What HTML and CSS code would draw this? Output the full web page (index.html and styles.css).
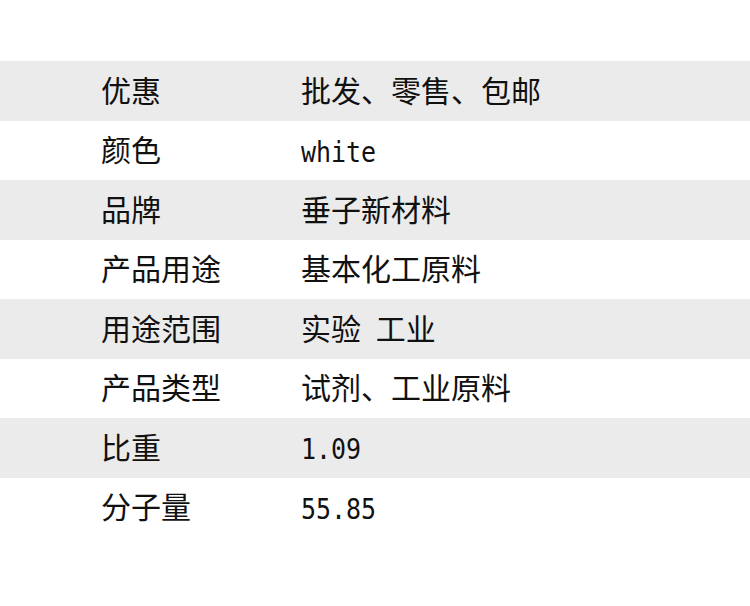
FILE: index.html
```html
<!DOCTYPE html>
<html lang="zh-CN">
<head>
<meta charset="utf-8">
<title>参数</title>
<link rel="stylesheet" href="styles.css">
</head>
<body>
<div class="table">
  <div class="row alt"><div class="k">优惠</div><div class="v">批发、零售、包邮</div></div>
  <div class="row"><div class="k">颜色</div><div class="v"><span class="lat">white</span></div></div>
  <div class="row alt"><div class="k">品牌</div><div class="v">垂子新材料</div></div>
  <div class="row"><div class="k">产品用途</div><div class="v">基本化工原料</div></div>
  <div class="row alt"><div class="k">用途范围</div><div class="v">实验 工业</div></div>
  <div class="row"><div class="k">产品类型</div><div class="v">试剂、工业原料</div></div>
  <div class="row alt"><div class="k">比重</div><div class="v"><span class="lat">1.09</span></div></div>
  <div class="row"><div class="k">分子量</div><div class="v"><span class="lat">55.85</span></div></div>
</div>
</body>
</html>
```
FILE: styles.css
```css
html, body {
  margin: 0;
  padding: 0;
  background: #ffffff;
}
body {
  width: 750px;
  height: 606px;
  overflow: hidden;
  font-family: "Noto Sans CJK SC", sans-serif;
  color: #111111;
}
.table {
  padding-top: 61px;
  display: flex;
  flex-direction: column;
}
.row {
  box-sizing: border-box;
  height: 59.5px;
  padding-bottom: 4px;
  display: flex;
  align-items: center;
  font-size: 30px;
  line-height: 1;
}
.row.alt {
  background: #ebebeb;
}
.k {
  width: 200px;
  padding-left: 101px;
  white-space: nowrap;
}
.v {
  white-space: nowrap;
  word-spacing: 8px;
}
.lat {
  display: inline-block;
  font-family: "DejaVu Sans Mono", monospace;
  font-size: 29px;
  transform: scaleX(0.86);
  transform-origin: left center;
  position: relative;
  top: 2px;
}
```
